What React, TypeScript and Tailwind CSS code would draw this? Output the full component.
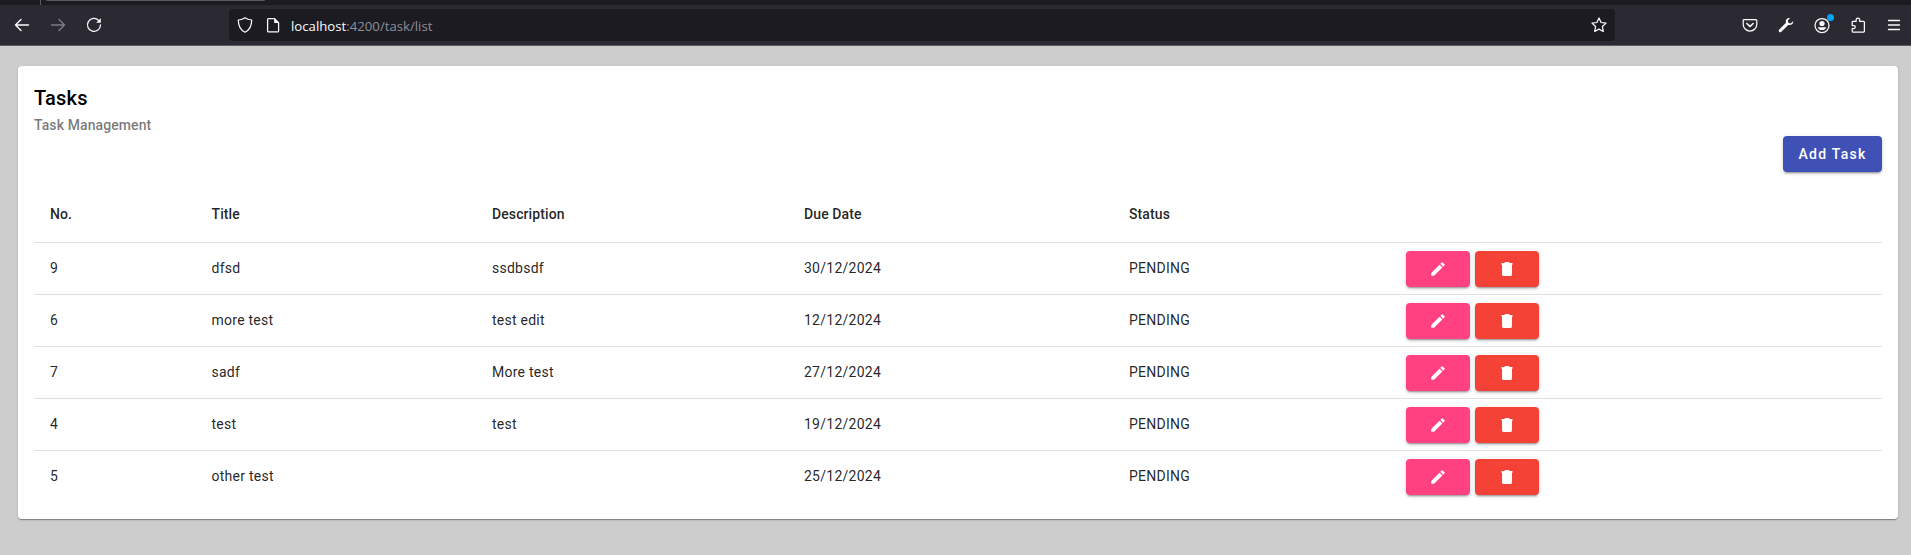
import React from "react";

type Task = { no: number; title: string; description: string; due: string; status: string };

const tasks: Task[] = [
  { no: 9, title: "dfsd", description: "ssdbsdf", due: "30/12/2024", status: "PENDING" },
  { no: 6, title: "more test", description: "test edit", due: "12/12/2024", status: "PENDING" },
  { no: 7, title: "sadf", description: "More test", due: "27/12/2024", status: "PENDING" },
  { no: 4, title: "test", description: "test", due: "19/12/2024", status: "PENDING" },
  { no: 5, title: "other test", description: "", due: "25/12/2024", status: "PENDING" },
];

const raised =
  "shadow-[0_3px_1px_-2px_rgba(0,0,0,0.2),0_2px_2px_0_rgba(0,0,0,0.14),0_1px_5px_0_rgba(0,0,0,0.12)]";

function Glyph({ children, className = "" }: { children: React.ReactNode; className?: string }) {
  return (
    <svg
      viewBox="0 0 16 16"
      className={"size-4 shrink-0 overflow-visible " + className}
      fill="none"
      stroke="currentColor"
      strokeWidth="1.25"
      strokeLinecap="round"
      strokeLinejoin="round"
    >
      {children}
    </svg>
  );
}

function BrowserBar() {
  return (
    <header className="flex h-[46px] shrink-0 flex-col border-b border-[#5b5b66] bg-[#2b2a33] text-[#fbfbfe]">
      <div className="flex h-[5px] shrink-0 items-start bg-[#1c1b22]">
        <div className="h-[5px] w-[41px] border-r border-[#5b5b66]" />
        <div className="ml-[5px] h-px w-[219px] rounded-b-sm bg-[#5b5b66]" />
      </div>
      <div className="flex flex-1 items-center">
        <nav className="ml-[14px] flex w-[215px] items-center gap-5">
          <Glyph><path d="M1.5 8h13M7 2.500 1.500 8 7 13.500" strokeWidth="1.4" /></Glyph>
          <Glyph className="opacity-40"><path d="M1.500 8h13M9 2.500 14.500 8 9 13.500" strokeWidth="1.4" /></Glyph>
          <Glyph>
            <path d="M12.500 3.200A6.500 6.500 0 1 0 14.500 8" strokeWidth="1.3" />
            <path d="M14.800 1.200v4.600h-4.600z" fill="currentColor" stroke="none" />
          </Glyph>
        </nav>
        <div className="flex h-8 w-[1386px] items-center rounded bg-[#1c1b22] px-2">
          <Glyph>
            <path d="M8 .8c1.700 1.400 4.100 2 6.700 2.200 0 6-2 10-6.700 12.200C3.300 13 1.300 9 1.300 3 3.900 2.800 6.300 2.200 8 .8z" />
          </Glyph>
          <Glyph className="ml-3">
            <path d="M3.600 1.600h6l4 4v8.300a1 1 0 0 1-1 1h-9a1 1 0 0 1-1-1V2.600a1 1 0 0 1 1-1z" />
            <path d="M9.200 1.200v4.800h4.800z" fill="currentColor" stroke="none" />
          </Glyph>
          <span className="ml-[10px] flex-1 pt-0.5 font-['Open_Sans','Noto_Sans',sans-serif] text-[13.2px] leading-5 text-[#8f8f98]">
            <span className="text-[#fbfbfe]">localhost</span>:4200/task/list
          </span>
          <Glyph>
            <path d="m8 1 2.100 4.500 4.900.6-3.600 3.400.9 5L8 12.100l-4.300 2.400.9-5L1 6.100l4.900-.6z" />
          </Glyph>
        </div>
        <div className="ml-[127px] flex items-center gap-5">
          <Glyph>
            <path d="M2.200 2.500h11.600a1 1 0 0 1 1 1v3.700a6.800 6.800 0 0 1-13.600 0V3.500a1 1 0 0 1 1-1z" />
            <path d="M4.900 6.500 8 9.500l3.100-3" strokeWidth="1.6" />
          </Glyph>
          <Glyph>
            <path d="M15.200 4.200 12.600 6.400l-2.200-.7-.6-2.200L12 1C8.800.3 7.200 3 8 5.700L1.200 12.600a1.500 1.500 0 0 0 2.200 2.200l6.900-6.900c2.900.7 5.300-1 4.900-3.700z" fill="currentColor" stroke="none" />
          </Glyph>
          <div className="relative size-4">
            <Glyph>
              <circle cx="8" cy="8.500" r="7" />
              <circle cx="8" cy="6.500" r="2.600" fill="currentColor" stroke="none" />
              <path d="M3.700 10.200h8.600C11.500 12.300 10 13.100 8 13.100s-3.500-.8-4.300-2.900z" fill="currentColor" stroke="none" />
            </Glyph>
            <span className="absolute -right-1 -top-[3px] size-[7px] rounded-full bg-[#00a5f5]" />
          </div>
          <Glyph>
            <path d="M2.200 8.500V5.200a.8.8 0 0 1 .8-.8h3.100V3a1.800 1.800 0 0 1 3.600 0v1.400h3.900a.8.800 0 0 1 .8.800v9a.8.800 0 0 1-.8.800H3a.8.800 0 0 1-.8-.8v-2.700h1.600a1.500 1.500 0 0 0 0-3z" />
          </Glyph>
          <Glyph><path d="M2.500 3.500h11M2.500 8h11M2.500 12.500h11" strokeWidth="1.3" /></Glyph>
        </div>
      </div>
    </header>
  );
}

function EditButton() {
  return (
    <button aria-label="Edit" className={"flex h-9 w-16 items-center justify-center rounded bg-[#ff4081] text-white " + raised}>
      <svg viewBox="0 0 24 24" className="size-[18px]" fill="currentColor">
        <path d="M3 17.250V21h3.750L17.810 9.940l-3.750-3.750L3 17.250zM20.710 7.040a1 1 0 0 0 0-1.410l-2.340-2.340a1 1 0 0 0-1.410 0l-1.830 1.830 3.750 3.750 1.830-1.830z" />
      </svg>
    </button>
  );
}

function DeleteButton() {
  return (
    <button aria-label="Delete" className={"flex h-9 w-16 items-center justify-center rounded bg-[#f44336] text-white " + raised}>
      <svg viewBox="0 0 24 24" className="size-[18px]" fill="currentColor">
        <path d="M5.400 19.300c0 1.100.9 2 2 2h9.200c1.100 0 2-.9 2-2V5.500H5.400v13.800zM19.300 4H15.500l-1-1.300h-5L8.500 4H4.700v2.300h14.600V4z" />
      </svg>
    </button>
  );
}

const headings = ["No.", "Title", "Description", "Due Date", "Status", ""];

export default function App() {
  return (
    <div className="flex h-screen flex-col overflow-hidden bg-[#cdcdcd] font-[Roboto,sans-serif] text-black/87">
      <BrowserBar />
      <main className="ml-[18px] mr-[13px] mt-5 h-[453px] shrink-0 rounded bg-white px-4 pt-4 shadow-[0_2px_1px_-1px_rgba(0,0,0,0.2),0_1px_1px_0_rgba(0,0,0,0.14),0_1px_3px_0_rgba(0,0,0,0.12)]">
        <h1 className="text-xl font-medium leading-8 tracking-[0.2px] text-black">Tasks</h1>
        <h2 className="text-sm font-medium leading-[22px] tracking-[0.1px] text-black/54">Task Management</h2>
        <div className="flex h-[51px] items-start justify-end">
          <button className={"flex h-9 w-[99px] items-center justify-center rounded bg-[#3f51b5] text-sm font-medium tracking-[1.25px] text-white " + raised}>
            Add Task
          </button>
        </div>
        <table className="w-full table-fixed border-separate border-spacing-0 text-left text-sm">
          <colgroup>
            <col className="w-[161.5px]" />
            <col className="w-[280.5px]" />
            <col className="w-[312px]" />
            <col className="w-[325px]" />
            <col className="w-[277px]" />
            <col />
          </colgroup>
          <thead>
            <tr className="h-14 align-top tracking-[0.1px]">
              {headings.map((h, i) => (
                <th key={i} className="border-b border-black/12 px-4 pt-[17px] pb-0 font-medium">{h}</th>
              ))}
            </tr>
          </thead>
          <tbody>
            {tasks.map((t) => (
              <tr key={t.no} className="group h-[52px] align-top tracking-[0.25px]">
                {[t.no, t.title, t.description, t.due, t.status].map((value, i) => (
                  <td key={i} className="border-b border-black/12 px-4 pt-[15px] pb-0 group-last:border-b-0">{value}</td>
                ))}
                <td className="border-b border-black/12 px-4 pt-2 pb-0 group-last:border-b-0">
                  <div className="flex gap-[5px]">
                    <EditButton />
                    <DeleteButton />
                  </div>
                </td>
              </tr>
            ))}
          </tbody>
        </table>
      </main>
    </div>
  );
}
